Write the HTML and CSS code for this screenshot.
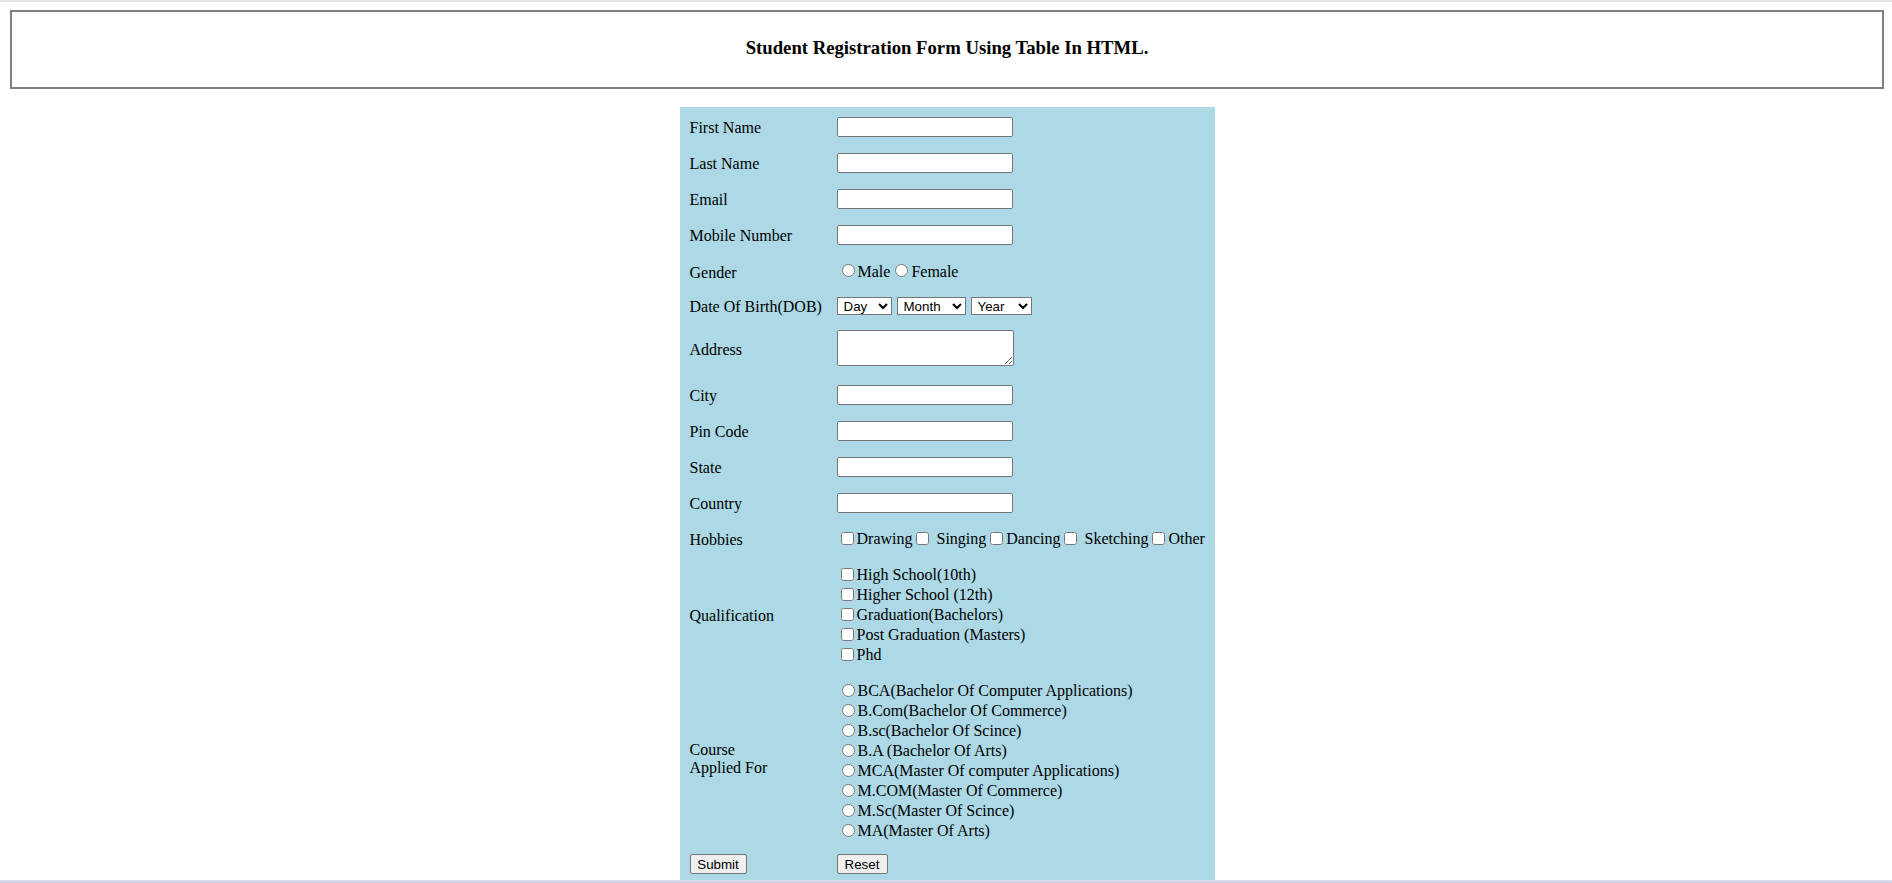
FILE: index.html
```html
<!DOCTYPE html>
<html>
<head>
<meta charset="utf-8">
<title>Student Registration Form</title>
<link rel="stylesheet" href="styles.css">
</head>
<body>
<div class="topbar"></div>
<div class="page">
  <div class="title-box">
    <h3 class="title">Student Registration Form Using Table In HTML.</h3>
  </div>
  <table class="form-table">
    <tr class="row">
      <td class="label">First Name</td>
      <td class="control"><input type="text" class="text-input"></td>
    </tr>
    <tr class="row">
      <td class="label">Last Name</td>
      <td class="control"><input type="text" class="text-input"></td>
    </tr>
    <tr class="row">
      <td class="label">Email</td>
      <td class="control"><input type="text" class="text-input"></td>
    </tr>
    <tr class="row">
      <td class="label">Mobile Number</td>
      <td class="control"><input type="text" class="text-input"></td>
    </tr>
    <tr class="row-gender">
      <td class="label">Gender</td>
      <td class="control"><div class="line"><input type="radio" name="gender" class="radio">Male<input type="radio" name="gender" class="radio">Female</div></td>
    </tr>
    <tr class="row-dob">
      <td class="label">Date Of Birth(DOB)</td>
      <td class="control">
        <div class="dob">
          <select class="select select-day">
            <option>Day</option><option>1</option><option>2</option><option>3</option><option>4</option><option>5</option>
          </select>
          <select class="select select-month">
            <option>Month</option><option>Jan</option><option>Feb</option><option>Mar</option>
          </select>
          <select class="select select-year">
            <option>Year</option><option>2000</option><option>2001</option><option>2002</option>
          </select>
        </div>
      </td>
    </tr>
    <tr class="row-address">
      <td class="label">Address</td>
      <td class="control"><textarea class="textarea"></textarea></td>
    </tr>
    <tr class="row">
      <td class="label">City</td>
      <td class="control"><input type="text" class="text-input"></td>
    </tr>
    <tr class="row">
      <td class="label">Pin Code</td>
      <td class="control"><input type="text" class="text-input"></td>
    </tr>
    <tr class="row">
      <td class="label">State</td>
      <td class="control"><input type="text" class="text-input"></td>
    </tr>
    <tr class="row">
      <td class="label">Country</td>
      <td class="control"><input type="text" class="text-input"></td>
    </tr>
    <tr class="row">
      <td class="label">Hobbies</td>
      <td class="control"><div class="line"><input type="checkbox" class="check">Drawing<input type="checkbox" class="check">&nbsp;Singing<input type="checkbox" class="check">Dancing<input type="checkbox" class="check">&nbsp;Sketching<input type="checkbox" class="check">Other</div></td>
    </tr>
    <tr class="row-qual">
      <td class="label">Qualification</td>
      <td class="control">
        <div class="line"><input type="checkbox" class="check">High School(10th)</div>
        <div class="line"><input type="checkbox" class="check">Higher School (12th)</div>
        <div class="line"><input type="checkbox" class="check">Graduation(Bachelors)</div>
        <div class="line"><input type="checkbox" class="check">Post Graduation (Masters)</div>
        <div class="line"><input type="checkbox" class="check">Phd</div>
      </td>
    </tr>
    <tr class="row-course">
      <td class="label label-course">Course<br>Applied For</td>
      <td class="control">
        <div class="line"><input type="radio" name="course" class="radio">BCA(Bachelor Of Computer Applications)</div>
        <div class="line"><input type="radio" name="course" class="radio">B.Com(Bachelor Of Commerce)</div>
        <div class="line"><input type="radio" name="course" class="radio">B.sc(Bachelor Of Scince)</div>
        <div class="line"><input type="radio" name="course" class="radio">B.A (Bachelor Of Arts)</div>
        <div class="line"><input type="radio" name="course" class="radio">MCA(Master Of computer Applications)</div>
        <div class="line"><input type="radio" name="course" class="radio">M.COM(Master Of Commerce)</div>
        <div class="line"><input type="radio" name="course" class="radio">M.Sc(Master Of Scince)</div>
        <div class="line"><input type="radio" name="course" class="radio">MA(Master Of Arts)</div>
      </td>
    </tr>
    <tr class="row-actions">
      <td class="label label-action"><button type="submit" class="btn btn-submit">Submit</button></td>
      <td class="control"><button type="reset" class="btn btn-reset">Reset</button></td>
    </tr>
  </table>
</div>
<div class="bottom-strip"></div>
</body>
</html>
```

FILE: styles.css
```css
html, body {
  margin: 0;
  padding: 0;
  background: #ffffff;
}

body {
  font-family: "Liberation Serif", "Times New Roman", serif;
  color: #000;
}

.topbar {
  height: 2px;
  background: #e3e3e3;
}

.page {
  padding: 8px 8px 0 10px;
}

.title-box {
  height: 79px;
  box-sizing: border-box;
  border: 2px solid #7f7f7f;
  display: flex;
  align-items: center;
  justify-content: center;
  padding-bottom: 4px;
}

.title {
  margin: 0;
  font-size: 18.72px;
  font-weight: bold;
  line-height: 22px;
}

.form-table {
  width: 535px;
  margin: 18px auto 0;
  background: #add8e6;
  border-collapse: separate;
  border-spacing: 0;
  padding: 2px 0;
  font-size: 16px;
}

.form-table td {
  padding: 0;
  vertical-align: middle;
}

.row { height: 36px; }
.row-gender { height: 37px; }
.row-dob { height: 31px; }
.row-address { height: 56px; }
.row-qual { height: 116px; }
.row-course { height: 176px; }
.row-actions { height: 30px; }

.form-table td.label {
  width: 147px;
  padding-left: 10px;
  padding-top: 2px;
  white-space: nowrap;
}

.form-table td.label-course {
  padding-top: 0;
  padding-bottom: 4px;
}

.form-table td.label-action {
  padding-top: 0;
}

.text-input {
  display: block;
  width: 176px;
  height: 20px;
  box-sizing: border-box;
  margin: 0;
  border: 1px solid #767676;
  border-radius: 2px;
  background: #fff;
  padding: 1px 2px;
}

.textarea {
  display: block;
  width: 177px;
  height: 36px;
  box-sizing: border-box;
  margin: 0 0 2px 0;
  border: 1px solid #767676;
  border-radius: 2px;
  background: #fff;
  padding: 2px;
}

.line {
  display: flex;
  align-items: center;
  height: 20px;
  line-height: 20px;
  white-space: nowrap;
}

.check {
  width: 13px;
  height: 13px;
  margin: 0 3px 2px 4px;
}

.radio {
  width: 13px;
  height: 13px;
  margin: 0 3px 2px 5px;
}

.dob {
  display: flex;
  align-items: center;
  gap: 5px;
}

.select {
  height: 18px;
  box-sizing: border-box;
  margin: 0;
  padding: 0 0 0 2px;
  font-family: "Liberation Sans", Arial, sans-serif;
  font-size: 13.33px;
  color: #000;
  background-color: #fff;
  border: 1px solid #767676;
}

.select-day { width: 55px; }
.select-month { width: 69px; }
.select-year { width: 61px; }

.btn {
  height: 20px;
  box-sizing: border-box;
  margin: 0;
  padding: 0;
  font-family: "Liberation Sans", Arial, sans-serif;
  font-size: 13.33px;
  color: #000;
  background: #efefef;
  border: 1px solid #767676;
  border-radius: 2px;
}

.btn-submit { width: 57px; }
.btn-reset { width: 51px; }

.bottom-strip {
  position: fixed;
  left: 0;
  right: 0;
  bottom: 0;
  height: 3px;
  background: linear-gradient(#dfe2ee, #c9cde0);
}
```
